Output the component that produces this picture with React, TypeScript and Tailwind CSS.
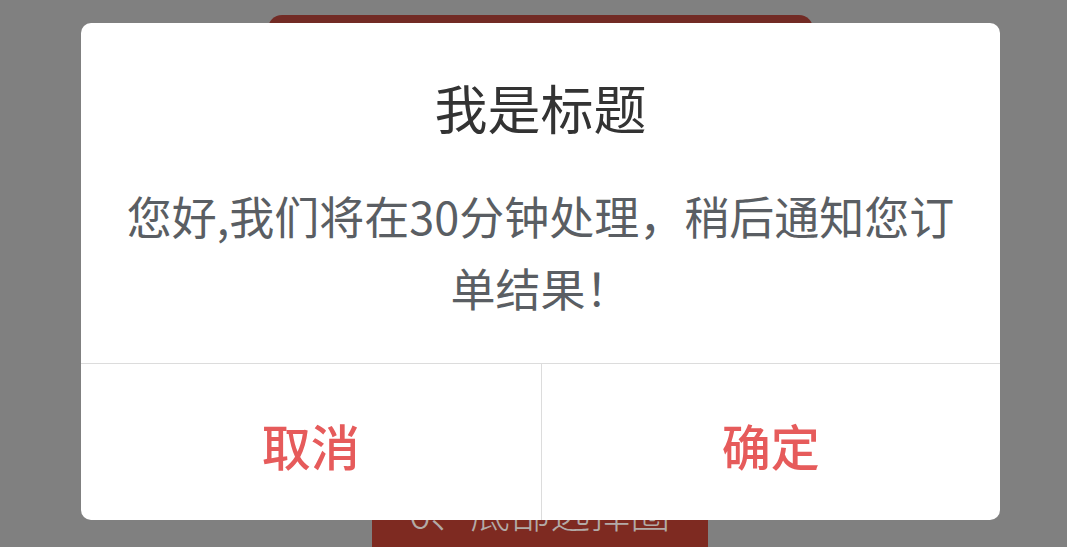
import React from 'react';

const font = { fontFamily: '"Noto Sans CJK SC", "Noto Sans", sans-serif' };

const ConfirmDialog: React.FC = () => (
  <div className="absolute left-[81px] top-[23px] w-[919px] overflow-hidden rounded-[10px] bg-white">
    <div className="px-[44px] pt-[56px] pb-[39px] text-center">
      <h2 className="text-[53px] leading-[56px] font-normal text-[#333333]">我是标题</h2>
      <p className="mt-[45px] text-[45px] leading-[72px] text-[#5a5e63]">
        您好,我们将在30分钟处理，稍后通知您订单结果！
      </p>
    </div>
    <div className="grid grid-cols-2 border-t border-[#dcdcdc]">
      <button className="h-[156px] pt-[6px] text-[49px] font-medium text-[#e65b5b]">取消</button>
      <button className="h-[156px] pt-[6px] border-l border-[#dcdcdc] text-[49px] font-medium text-[#e65b5b]">
        确定
      </button>
    </div>
  </div>
);

export default function App() {
  return (
    <div className="relative h-[547px] w-[1067px] overflow-hidden bg-[#808080]" style={font}>
      {/* page behind the mask */}
      <div className="flex h-full flex-col items-center pt-[15px]">
        <div className="ml-[14px] h-[80px] w-[545px] rounded-[14px] bg-[#722b25]"></div>
        <div className="mt-auto flex h-[60px] w-[336px] translate-x-[6px] items-start justify-center bg-[#7e2a21] text-[40px] leading-[48px] font-light text-[#b3aaa7]">
          6、底部选择圈
        </div>
      </div>
      <ConfirmDialog />
    </div>
  );
}
